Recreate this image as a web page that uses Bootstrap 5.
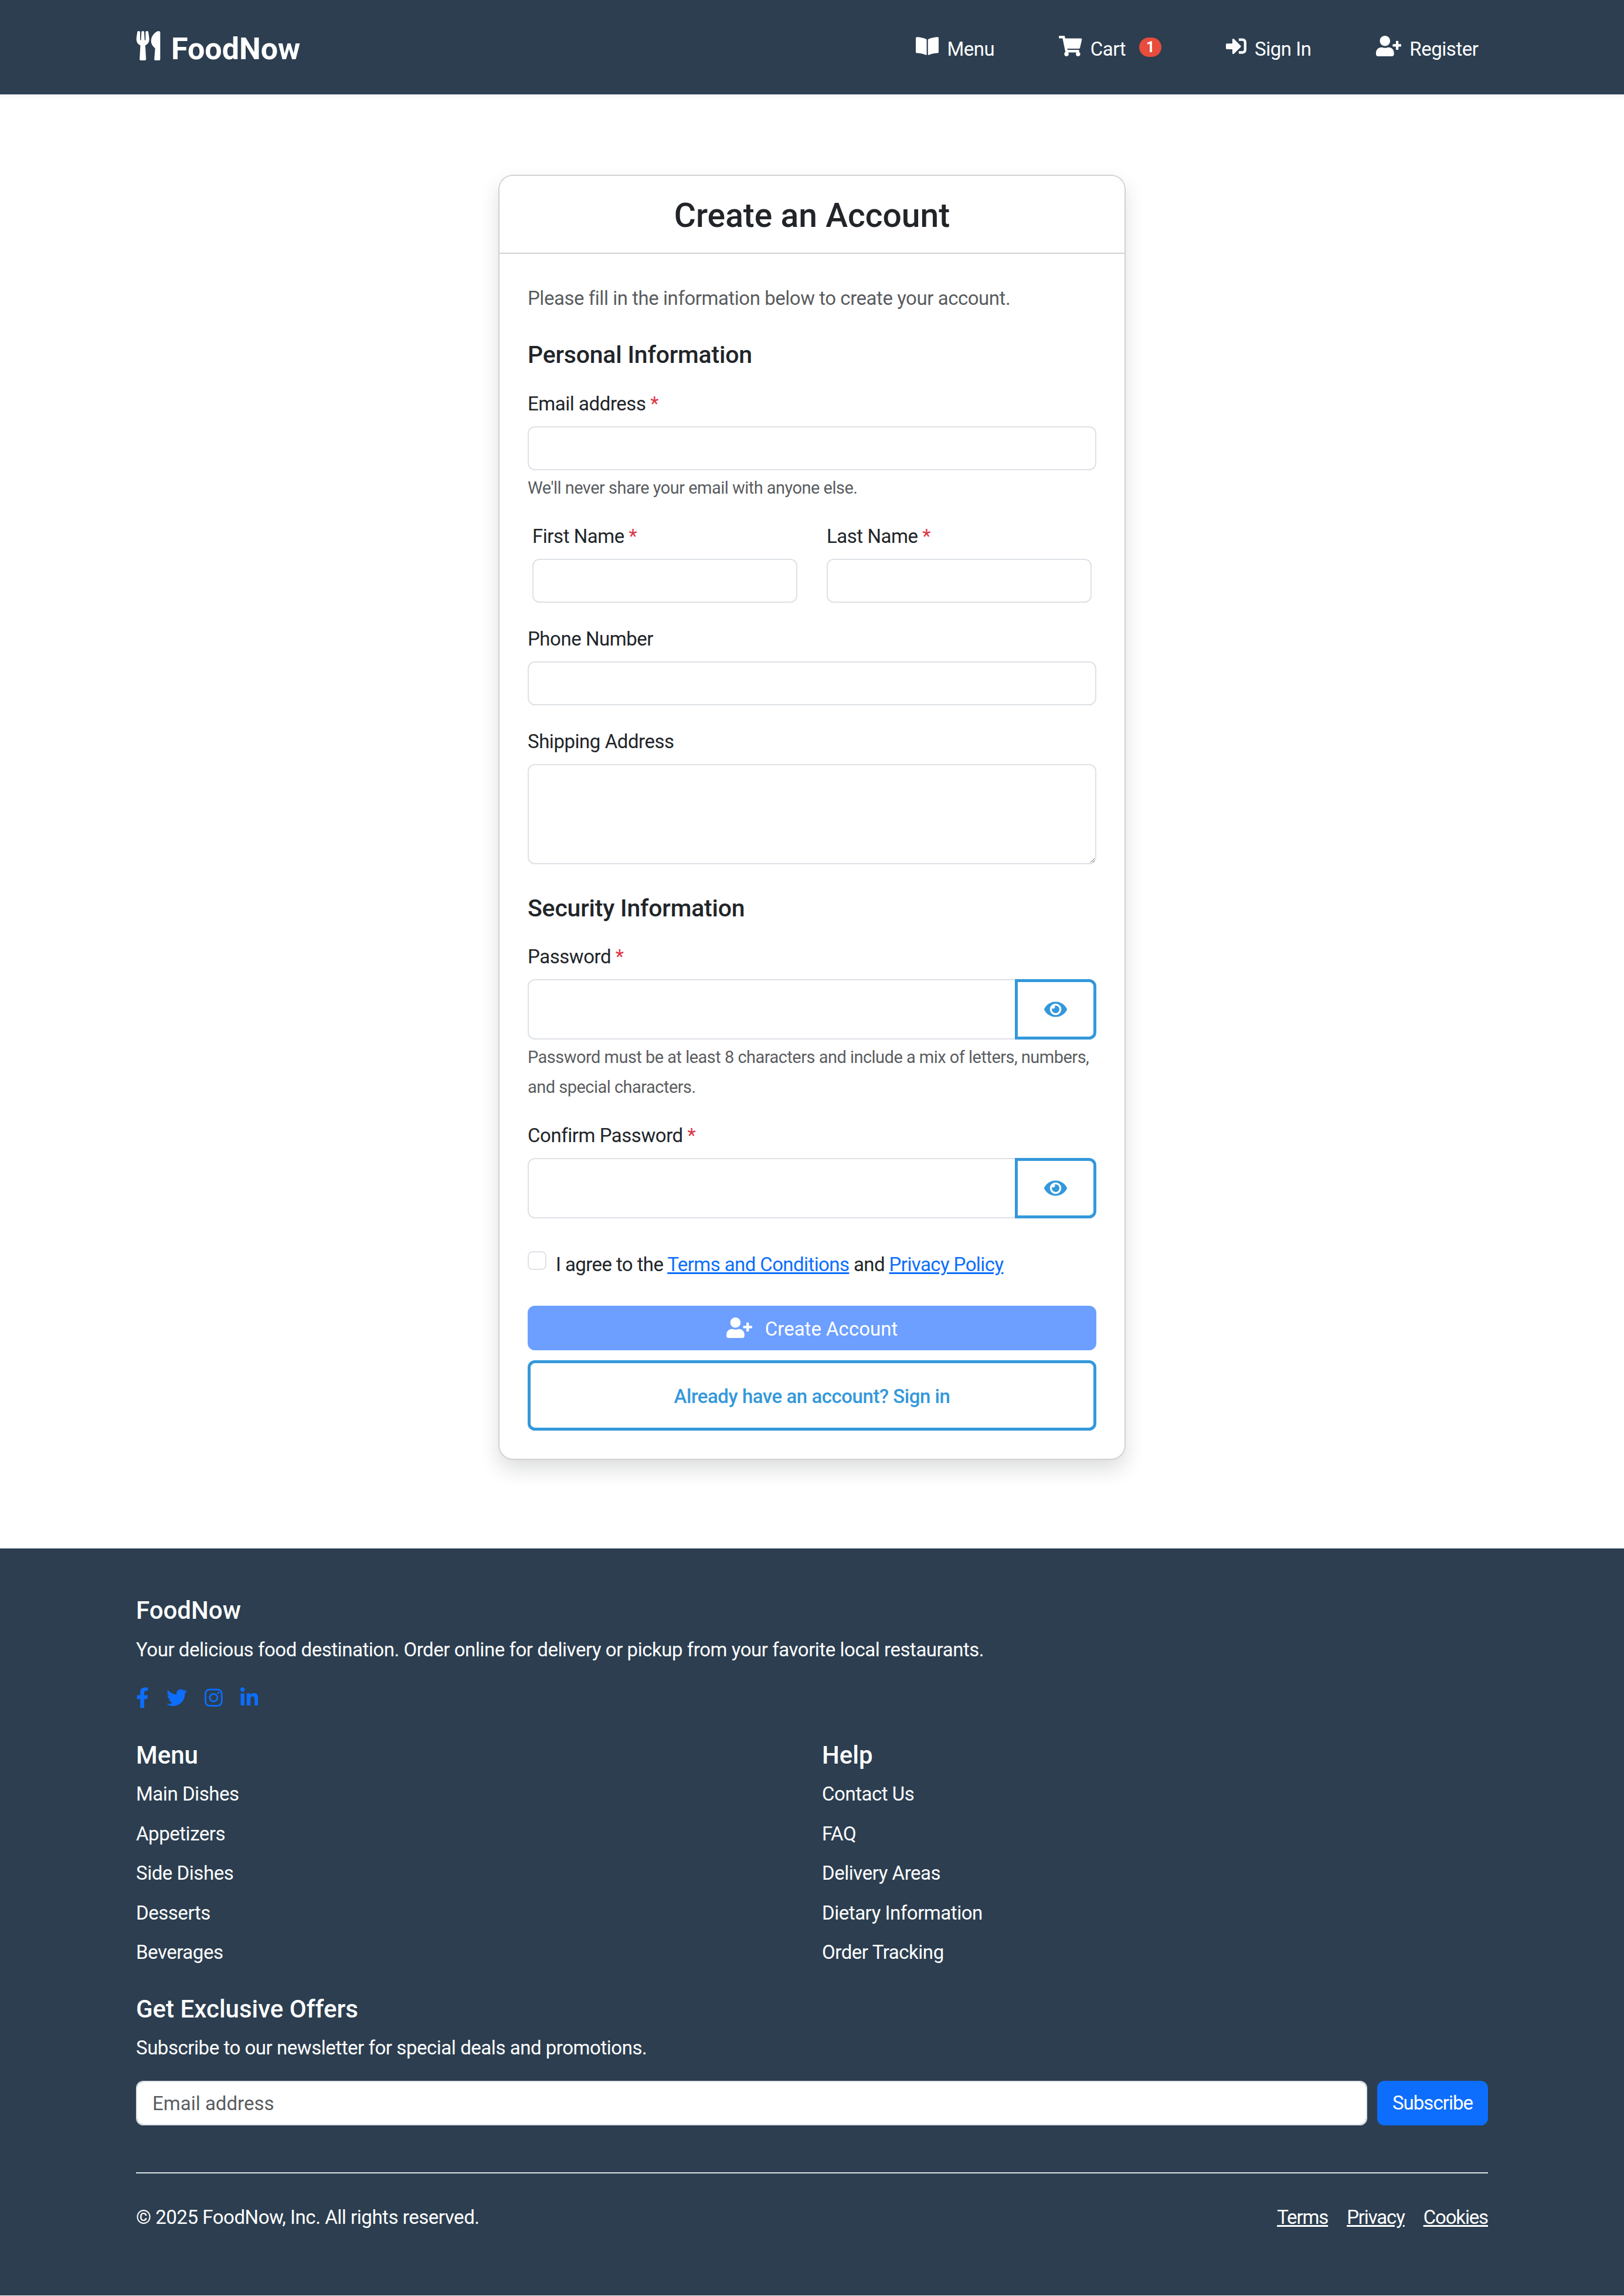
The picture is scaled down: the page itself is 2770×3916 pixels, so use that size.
<!doctype html>
<html lang="en">
<head>
<meta charset="utf-8">
<title>FoodNow - Register</title>
<link href="https://cdn.jsdelivr.net/npm/bootstrap@5.3.1/dist/css/bootstrap.min.css" rel="stylesheet">
<style>
  html { font-size: 33px; }
  :root {
    --bs-body-font-family: "Roboto", "Noto Sans", sans-serif;
    --bs-border-width: 2.5px;
    --bs-border-radius: 14px;
    --bs-box-shadow: 0 20px 40px rgba(0, 0, 0, .15);
    --bs-box-shadow-sm: 0 5px 10px rgba(0, 0, 0, .075);
  }
  body { letter-spacing: -.014em; }
  svg { fill: currentColor; vertical-align: -.125em; }

  .container { max-width: 2366px; --bs-gutter-x: 60px; }

  /* top bar */
  .top-bar {
    background: #2c3e50;
    min-height: 161px;
    padding: 0;
    --bs-navbar-color: #fff;
    --bs-navbar-hover-color: #fff;
    --bs-navbar-active-color: #fff;
    --bs-navbar-brand-color: #fff;
    --bs-navbar-brand-hover-color: #fff;
  }
  .top-bar .navbar-brand { font-size: 52px; font-weight: 700; letter-spacing: 0; padding: 6px 0 0; margin: 0; display: flex; align-items: center; gap: 18px; }
  .brand-icon { height: 50px; width: 42px; margin-top: -11px; }
  .top-bar .nav-item { margin-left: 77px; }
  .top-bar .nav-link { padding: 6px 18px 0; display: flex; align-items: center; }
  .nav-ico { height: 35px; margin-right: 14px; margin-top: -10px; }
  .cart-count { background: #e74c3c; font-size: 25px; width: 38px; height: 33px; line-height: 33px; padding: 0; margin-left: 23px; margin-top: -6px; }

  /* register card */
  .page-body { padding: 137px 0 151.5px; }
  .signup-card { width: 1070px; margin: 0 auto; --bs-card-border-radius: 25px; --bs-card-inner-border-radius: 23px; --bs-card-cap-bg: #fff; }
  .signup-card .card-header { height: 133px; padding: 5px 0 0; display: flex; align-items: center; justify-content: center; }
  .signup-card .card-header h3 { font-size: 57px; font-weight: 500; letter-spacing: 0; margin: 0; line-height: 1.2; }
  .signup-card .card-body { padding: 50px 48px 48px; }
  .intro-text { margin-bottom: 44px; line-height: 52px; }
  .group-title { font-size: 41px; font-weight: 500; letter-spacing: -.005em; line-height: 52px; margin-bottom: 30px; }
  .field { margin-bottom: 34px; }
  .mail-field { margin-bottom: 29px; }
  .form-label { line-height: 52px; padding-top: 2px; margin-bottom: 12px; display: block; }
  .form-control { height: 75px; font-size: 33px; padding: 0 26px; }
  .addr-field { height: 171px; }
  .form-text { font-size: 29px; letter-spacing: -.018em; line-height: 51px; margin-top: 5px; }
  .name-row { padding-inline: 8px; gap: 50px; }
  .name-row > div { flex: 1 1 0; }
  .security-title { margin-top: 48.5px; margin-bottom: 29.5px; }
  .pass-field { margin-bottom: 29px; }
  .confirm-field { margin-bottom: 49px; }
  .pass-group .form-control { height: 103px; }
  .eye-btn { width: 139px; --bs-btn-border-width: 5px; --bs-btn-border-color: #3498db; --bs-btn-color: #3498db; --bs-btn-bg: #fff; --bs-btn-hover-bg: #3498db; --bs-btn-hover-border-color: #3498db; display: flex; align-items: center; justify-content: center; }
  .eye-btn svg { height: 35px; width: 39px; }
  .terms-row { padding: 4px 0 0 48px; min-height: 56px; margin-bottom: 43.5px; line-height: 52px; letter-spacing: -.018em; }
  .terms-row .form-check-input { width: 32px; height: 32px; margin-left: -48px; margin-top: 3px; }
  .terms-row a { text-decoration-thickness: 3px; }
  .create-btn {
    height: 76px; font-size: 33px; padding: 4px 0 0;
    --bs-btn-disabled-bg: #6c9fff; --bs-btn-disabled-border-color: #6c9fff; --bs-btn-disabled-color: #fff; --bs-btn-disabled-opacity: 1;
  }
  .create-btn svg { height: 35px; width: 44px; margin-right: 22px; margin-top: -4px; }
  .signin-btn {
    margin-top: 17px; height: 120px; padding: 5px 0 0; display: flex; align-items: center; justify-content: center; font-weight: 500;
    --bs-btn-border-width: 5px; --bs-btn-border-color: #3498db; --bs-btn-color: #3498db; --bs-btn-hover-bg: #3498db; --bs-btn-hover-border-color: #3498db;
  }

  /* footer */
  .site-foot { background: #2c3e50; color: #fff; padding: 80px 0 0; height: 1274px; }
  .site-foot a { color: #fff; }
  .foot-title { font-size: 42px; font-weight: 500; letter-spacing: 0; line-height: 52px; margin: 0 0 14.5px; }
  .foot-text { line-height: 52px; margin: 0; }
  .social-row { gap: 30px; margin: 30px 0 46px; color: #0d6efd; height: 52px; align-items: center; }
  .social-row a { color: #0d6efd; display: flex; }
  .social-row svg { height: 35px; }
  .foot-cols { --bs-gutter-x: 34px; }
  .foot-links { margin: 0 0 44.5px; }
  .foot-links li { line-height: 52px; margin-bottom: 15.5px; }
  .foot-links a { text-decoration: none; }
  .news-form { gap: 17px; margin-top: 30px; }
  .news-form .form-control { height: 76px; flex: 1 1 auto; }
  .news-form .btn { height: 76px; width: 189px; padding: 0; font-size: 33px; letter-spacing: -.03em; flex: none; }
  .foot-rule { margin: 80px 0 50px; border-top: 2.5px solid #dee2e6; opacity: 1; }
  .legal-links { gap: 32px; letter-spacing: -.035em; }
</style>
</head>
<body>

<nav class="navbar navbar-expand-lg navbar-dark top-bar shadow-sm">
  <div class="container">
    <a class="navbar-brand" href="#">
      <svg class="brand-icon" viewBox="0 0 416 512"><path d="M207.9 15.2c.8 4.7 16.1 94.5 16.1 128.8 0 52.3-27.8 89.6-68.9 104.6L168 486.7c.7 13.7-10.2 25.3-24 25.3H80c-13.7 0-24.7-11.5-24-25.3l12.9-238.1C27.7 233.6 0 196.2 0 144 0 109.6 15.3 19.9 16.1 15.2 19.3-5.1 61.4-5.4 64 16.3v141.2c1.3 3.4 15.1 3.2 16 0 1.4-25.3 7.9-139.2 8-141.8 3.3-20.8 44.7-20.8 47.9 0 .2 2.7 6.6 116.5 8 141.8.9 3.2 14.8 3.4 16 0V16.3c2.6-21.6 44.8-21.4 48-1.1zm119.2 285.7l-15 185.1c-1.2 14 9.9 26 23.9 26h56c13.3 0 24-10.7 24-24V24c0-13.2-10.7-24-24-24-82.5 0-221.4 178.5-64.9 300.9z"/></svg>
      FoodNow
    </a>
    <ul class="navbar-nav ms-auto">
      <li class="nav-item"><a class="nav-link" href="#">
        <svg class="nav-ico" viewBox="0 0 576 512"><path d="M542.22 32.05c-54.8 3.11-163.72 14.43-230.96 55.59-4.64 2.84-7.27 7.89-7.27 13.17v363.87c0 11.55 12.63 18.85 23.28 13.49 69.18-34.82 169.23-44.32 218.7-46.92 16.89-.89 30.02-14.43 30.02-30.66V62.75c.01-17.71-15.35-31.74-33.77-30.7zM264.73 87.64C197.5 46.48 88.58 35.17 33.78 32.05 15.36 31.01 0 45.04 0 62.75V400.6c0 16.24 13.13 29.78 30.02 30.66 49.49 2.6 149.59 12.11 218.77 46.95 10.62 5.35 23.21-1.94 23.21-13.46V100.63c0-5.29-2.62-10.14-7.27-12.99z"/></svg>Menu</a></li>
      <li class="nav-item"><a class="nav-link" href="#">
        <svg class="nav-ico" viewBox="0 0 576 512"><path d="M528.12 301.319l47.273-208C578.806 78.301 567.391 64 551.99 64H159.208l-9.166-44.81C147.758 8.021 137.93 0 126.529 0H24C10.745 0 0 10.745 0 24v16c0 13.255 10.745 24 24 24h69.883l70.248 343.435C147.325 417.1 136 435.222 136 456c0 30.928 25.072 56 56 56s56-25.072 56-56c0-15.674-6.447-29.835-16.824-40h209.647C430.447 426.165 424 440.326 424 456c0 30.928 25.072 56 56 56s56-25.072 56-56c0-22.172-12.888-41.332-31.579-50.405l5.517-24.276c3.413-15.018-8.002-29.319-23.403-29.319H218.117l-6.545-32h293.145c11.206 0 20.92-7.754 23.403-18.681z"/></svg>Cart<span class="badge rounded-pill cart-count">1</span></a></li>
      <li class="nav-item"><a class="nav-link" href="#">
        <svg class="nav-ico" viewBox="0 0 512 512"><path d="M416 448h-84c-6.6 0-12-5.4-12-12v-40c0-6.6 5.4-12 12-12h84c17.7 0 32-14.3 32-32V160c0-17.7-14.3-32-32-32h-84c-6.6 0-12-5.4-12-12V76c0-6.6 5.4-12 12-12h84c53 0 96 43 96 96v192c0 53-43 96-96 96zm-47-201L201 79c-15-15-41-4.5-41 17v96H24c-13.3 0-24 10.7-24 24v96c0 13.3 10.7 24 24 24h136v96c0 21.5 26 32 41 17l168-168c9.3-9.4 9.3-24.6 0-34z"/></svg>Sign In</a></li>
      <li class="nav-item"><a class="nav-link" href="#">
        <svg class="nav-ico" viewBox="0 0 640 512"><path d="M624 208h-64v-64c0-8.8-7.2-16-16-16h-32c-8.8 0-16 7.2-16 16v64h-64c-8.8 0-16 7.2-16 16v32c0 8.8 7.2 16 16 16h64v64c0 8.8 7.2 16 16 16h32c8.8 0 16-7.2 16-16v-64h64c8.8 0 16-7.2 16-16v-32c0-8.8-7.2-16-16-16zm-400 48c70.7 0 128-57.3 128-128S294.7 0 224 0 96 57.3 96 128s57.3 128 128 128zm89.6 32h-16.7c-22.2 10.2-46.9 16-72.9 16s-50.6-5.8-72.9-16h-16.7C60.2 288 0 348.2 0 422.4V464c0 26.5 21.5 48 48 48h352c26.5 0 48-21.5 48-48v-41.6c0-74.2-60.2-134.4-134.4-134.4z"/></svg>Register</a></li>
    </ul>
  </div>
</nav>

<main class="page-body">
  <div class="card signup-card shadow">
    <div class="card-header">
      <h3>Create an Account</h3>
    </div>
    <div class="card-body">
      <p class="intro-text text-body-secondary">Please fill in the information below to create your account.</p>
      <form>
        <div class="group-title">Personal Information</div>
        <div class="field mail-field">
          <label class="form-label" for="email">Email address <span class="text-danger">*</span></label>
          <input type="email" class="form-control" id="email">
          <div class="form-text">We'll never share your email with anyone else.</div>
        </div>
        <div class="d-flex name-row field">
          <div>
            <label class="form-label" for="first">First Name <span class="text-danger">*</span></label>
            <input type="text" class="form-control" id="first">
          </div>
          <div>
            <label class="form-label" for="last">Last Name <span class="text-danger">*</span></label>
            <input type="text" class="form-control" id="last">
          </div>
        </div>
        <div class="field">
          <label class="form-label" for="phone">Phone Number</label>
          <input type="tel" class="form-control" id="phone">
        </div>
        <div class="field">
          <label class="form-label" for="addr">Shipping Address</label>
          <textarea class="form-control addr-field" id="addr" rows="3"></textarea>
        </div>

        <div class="group-title security-title">Security Information</div>
        <div class="field pass-field">
          <label class="form-label" for="pass">Password <span class="text-danger">*</span></label>
          <div class="input-group pass-group">
            <input type="password" class="form-control" id="pass">
            <button class="btn eye-btn" type="button"><svg viewBox="0 0 576 512"><path d="M572.52 241.4C518.29 135.59 410.93 64 288 64S57.68 135.64 3.48 241.41a32.35 32.35 0 0 0 0 29.19C57.71 376.41 165.07 448 288 448s230.32-71.64 284.52-177.41a32.35 32.35 0 0 0 0-29.19zM288 400a144 144 0 1 1 144-144 143.93 143.93 0 0 1-144 144zm0-240a95.31 95.31 0 0 0-25.31 3.79 47.85 47.85 0 0 1-66.9 66.9A95.78 95.78 0 1 0 288 160z"/></svg></button>
          </div>
          <div class="form-text">Password must be at least 8 characters and include a mix of letters, numbers, and special characters.</div>
        </div>
        <div class="field confirm-field">
          <label class="form-label" for="confirm">Confirm Password <span class="text-danger">*</span></label>
          <div class="input-group pass-group">
            <input type="password" class="form-control" id="confirm">
            <button class="btn eye-btn" type="button"><svg viewBox="0 0 576 512"><path d="M572.52 241.4C518.29 135.59 410.93 64 288 64S57.68 135.64 3.48 241.41a32.35 32.35 0 0 0 0 29.19C57.71 376.41 165.07 448 288 448s230.32-71.64 284.52-177.41a32.35 32.35 0 0 0 0-29.19zM288 400a144 144 0 1 1 144-144 143.93 143.93 0 0 1-144 144zm0-240a95.31 95.31 0 0 0-25.31 3.79 47.85 47.85 0 0 1-66.9 66.9A95.78 95.78 0 1 0 288 160z"/></svg></button>
          </div>
        </div>
        <div class="form-check terms-row">
          <input class="form-check-input" type="checkbox" id="terms">
          <label class="form-check-label" for="terms">I agree to the <a href="#">Terms and Conditions</a> and <a href="#">Privacy Policy</a></label>
        </div>
        <button type="submit" class="btn btn-primary w-100 create-btn" disabled>
          <svg viewBox="0 0 640 512"><path d="M624 208h-64v-64c0-8.8-7.2-16-16-16h-32c-8.8 0-16 7.2-16 16v64h-64c-8.8 0-16 7.2-16 16v32c0 8.8 7.2 16 16 16h64v64c0 8.8 7.2 16 16 16h32c8.8 0 16-7.2 16-16v-64h64c8.8 0 16-7.2 16-16v-32c0-8.8-7.2-16-16-16zm-400 48c70.7 0 128-57.3 128-128S294.7 0 224 0 96 57.3 96 128s57.3 128 128 128zm89.6 32h-16.7c-22.2 10.2-46.9 16-72.9 16s-50.6-5.8-72.9-16h-16.7C60.2 288 0 348.2 0 422.4V464c0 26.5 21.5 48 48 48h352c26.5 0 48-21.5 48-48v-41.6c0-74.2-60.2-134.4-134.4-134.4z"/></svg>Create Account
        </button>
        <a href="#" class="btn signin-btn w-100">Already have an account? Sign in</a>
      </form>
    </div>
  </div>
</main>

<footer class="site-foot">
  <div class="container">
    <h5 class="foot-title">FoodNow</h5>
    <p class="foot-text">Your delicious food destination. Order online for delivery or pickup from your favorite local restaurants.</p>
    <div class="d-flex social-row">
      <a href="#"><svg viewBox="0 0 320 512"><path d="M279.14 288l14.22-92.66h-88.91v-60.13c0-25.35 12.42-50.06 52.24-50.06h40.42V6.26S260.43 0 225.36 0c-73.22 0-121.08 44.38-121.08 124.72v70.62H22.89V288h81.39v224h100.17V288z"/></svg></a>
      <a href="#"><svg viewBox="0 0 512 512"><path d="M459.37 151.716c.325 4.548.325 9.097.325 13.645 0 138.72-105.583 298.558-298.558 298.558-59.452 0-114.68-17.219-161.137-47.106 8.447.974 16.568 1.299 25.34 1.299 49.055 0 94.213-16.568 130.274-44.832-46.132-.975-84.792-31.188-98.112-72.772 6.498.974 12.995 1.624 19.818 1.624 9.421 0 18.843-1.3 27.614-3.573-48.081-9.747-84.143-51.98-84.143-102.985v-1.299c13.969 7.797 30.214 12.67 47.431 13.319-28.264-18.843-46.781-51.005-46.781-87.391 0-19.492 5.197-37.36 14.294-52.954 51.655 63.675 129.3 105.258 216.365 109.807-1.624-7.797-2.599-15.918-2.599-24.04 0-57.828 46.782-104.934 104.934-104.934 30.213 0 57.502 12.67 76.67 33.137 23.715-4.548 46.456-13.32 66.599-25.34-7.798 24.366-24.366 44.833-46.132 57.827 21.117-2.273 41.584-8.122 60.426-16.243-14.292 20.791-32.161 39.308-52.628 54.253z"/></svg></a>
      <a href="#"><svg viewBox="0 0 448 512"><path d="M224.1 141c-63.6 0-114.9 51.3-114.9 114.9s51.3 114.9 114.9 114.9S339 319.5 339 255.9 287.7 141 224.1 141zm0 189.6c-41.1 0-74.7-33.5-74.7-74.7s33.5-74.7 74.7-74.7 74.7 33.5 74.7 74.7-33.6 74.7-74.7 74.7zm146.4-194.3c0 14.9-12 26.8-26.8 26.8-14.9 0-26.8-12-26.8-26.8s12-26.8 26.8-26.8 26.8 12 26.8 26.8zm76.1 27.2c-1.7-35.9-9.9-67.7-36.2-93.9-26.2-26.2-58-34.4-93.9-36.2-37-2.1-147.9-2.1-184.9 0-35.8 1.7-67.6 9.9-93.9 36.1s-34.4 58-36.2 93.9c-2.1 37-2.1 147.9 0 184.9 1.7 35.9 9.9 67.7 36.2 93.9s58 34.4 93.9 36.2c37 2.1 147.9 2.1 184.9 0 35.9-1.7 67.7-9.9 93.9-36.2 26.2-26.2 34.4-58 36.2-93.9 2.1-37 2.1-147.8 0-184.8zM398.8 388c-7.8 19.6-22.9 34.7-42.6 42.6-29.5 11.7-99.5 9-132.1 9s-102.7 2.6-132.1-9c-19.6-7.8-34.7-22.9-42.6-42.6-11.7-29.5-9-99.5-9-132.1s-2.6-102.7 9-132.1c7.8-19.6 22.9-34.7 42.6-42.6 29.5-11.7 99.5-9 132.1-9s102.7-2.6 132.1 9c19.6 7.8 34.7 22.9 42.6 42.6 11.7 29.5 9 99.5 9 132.1s2.7 102.7-9 132.1z"/></svg></a>
      <a href="#"><svg viewBox="0 0 448 512"><path d="M100.28 448H7.4V148.9h92.88zM53.79 108.1C24.09 108.1 0 83.5 0 53.8a53.79 53.79 0 0 1 107.58 0c0 29.7-24.1 54.3-53.79 54.3zM447.9 448h-92.68V302.4c0-34.7-.7-79.2-48.29-79.2-48.29 0-55.69 37.7-55.69 76.7V448h-92.78V148.9h89.08v40.8h1.3c12.4-23.5 42.69-48.3 87.88-48.3 94 0 111.28 61.9 111.28 142.3V448z"/></svg></a>
    </div>
    <div class="row foot-cols">
      <div class="col-6">
        <h5 class="foot-title">Menu</h5>
        <ul class="list-unstyled foot-links">
          <li><a href="#">Main Dishes</a></li>
          <li><a href="#">Appetizers</a></li>
          <li><a href="#">Side Dishes</a></li>
          <li><a href="#">Desserts</a></li>
          <li><a href="#">Beverages</a></li>
        </ul>
      </div>
      <div class="col-6">
        <h5 class="foot-title">Help</h5>
        <ul class="list-unstyled foot-links">
          <li><a href="#">Contact Us</a></li>
          <li><a href="#">FAQ</a></li>
          <li><a href="#">Delivery Areas</a></li>
          <li><a href="#">Dietary Information</a></li>
          <li><a href="#">Order Tracking</a></li>
        </ul>
      </div>
    </div>
    <h5 class="foot-title">Get Exclusive Offers</h5>
    <p class="foot-text">Subscribe to our newsletter for special deals and promotions.</p>
    <form class="d-flex news-form">
      <input type="email" class="form-control" placeholder="Email address">
      <button class="btn btn-primary" type="button">Subscribe</button>
    </form>
    <hr class="foot-rule">
    <div class="d-flex justify-content-between align-items-center">
      <span>© 2025 FoodNow, Inc. All rights reserved.</span>
      <div class="d-flex legal-links">
        <a href="#">Terms</a>
        <a href="#">Privacy</a>
        <a href="#">Cookies</a>
      </div>
    </div>
  </div>
</footer>

<script src="https://cdn.jsdelivr.net/npm/bootstrap@5.3.1/dist/js/bootstrap.bundle.min.js"></script>
</body>
</html>
